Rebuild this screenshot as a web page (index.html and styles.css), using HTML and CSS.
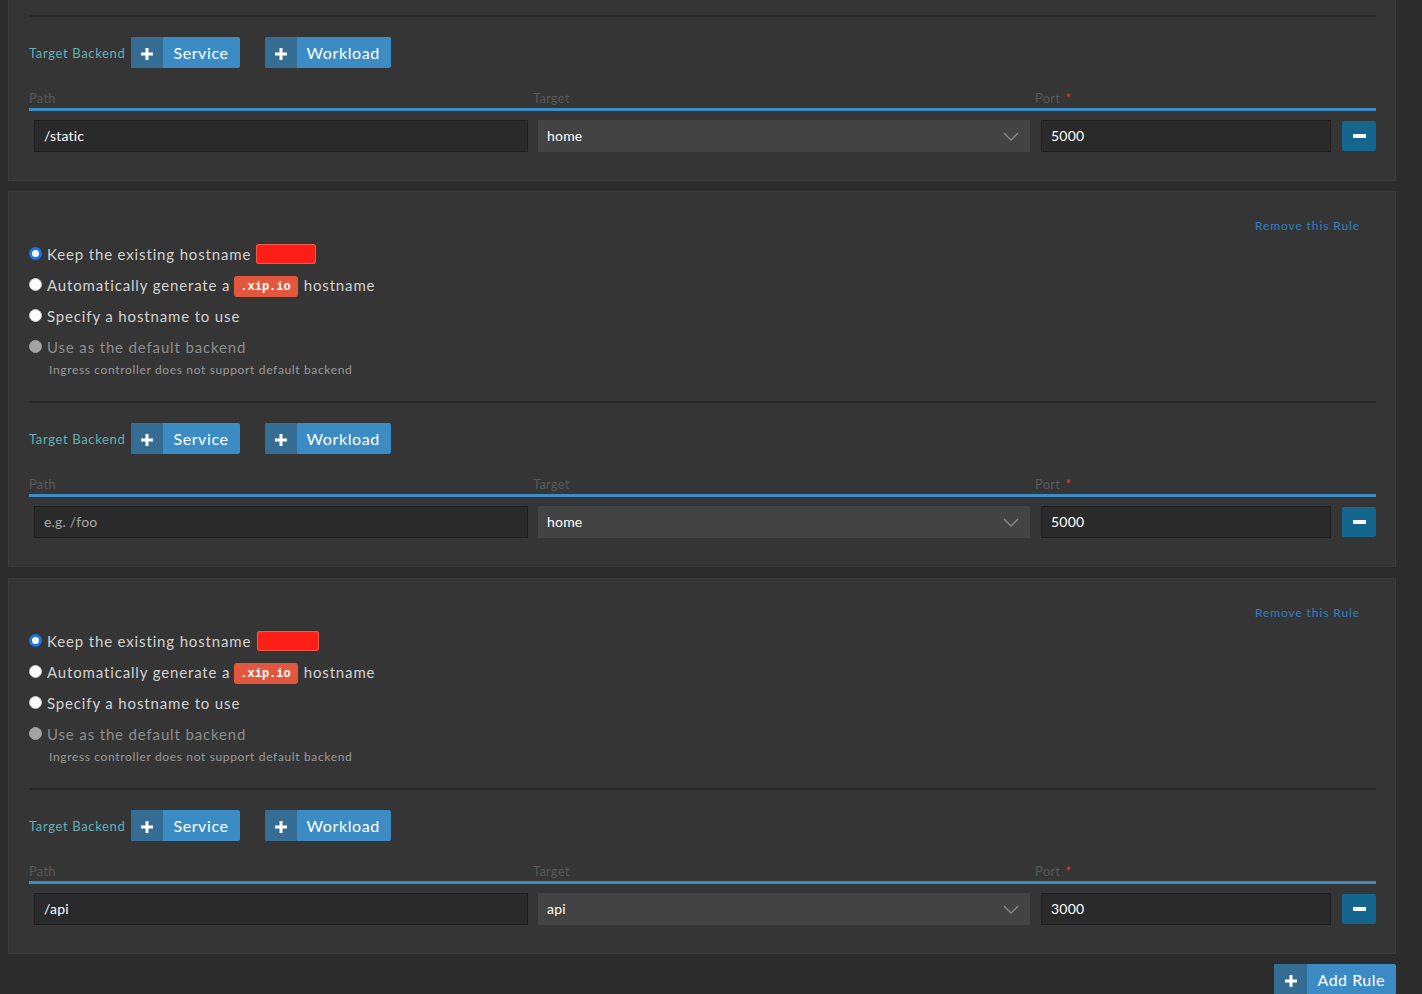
FILE: index.html
```html
<!DOCTYPE html>
<html lang="en">
<head>
<meta charset="utf-8">
<title>Ingress Rules</title>
<link rel="stylesheet" href="styles.css">
</head>
<body>
<div class="page">

  <section class="rule rule-first">
    <div class="sep"></div>
    <div class="backend">
      <span class="tb-label">Target Backend</span>
      <button class="btn"><span class="btn-icon"><svg width="12" height="12" viewBox="0 0 12 12"><rect x="4.5" y="0" width="3" height="12" fill="#fff"/><rect x="0" y="4.5" width="12" height="3" fill="#fff"/></svg></span><span class="btn-text">Service</span></button>
      <button class="btn"><span class="btn-icon"><svg width="12" height="12" viewBox="0 0 12 12"><rect x="4.5" y="0" width="3" height="12" fill="#fff"/><rect x="0" y="4.5" width="12" height="3" fill="#fff"/></svg></span><span class="btn-text">Workload</span></button>
    </div>
    <div class="cols labels"><div class="c1">Path</div><div class="c2">Target</div><div class="c3">Port <span class="req">*</span></div></div>
    <div class="cols inputs">
      <div class="c1"><div class="input">/static</div></div>
      <div class="c2"><div class="select"><span>home</span><svg class="chev" width="16" height="9" viewBox="0 0 16 9"><path d="M1 1 L8 8 L15 1" fill="none" stroke="#8a8a8a" stroke-width="1.3"/></svg></div></div>
      <div class="c3"><div class="input port">5000</div><button class="minus"><span></span></button></div>
    </div>
  </section>

  <section class="rule">
    <div class="rule-head"><a class="remove">Remove this Rule</a></div>
    <div class="radios">
      <div class="radio-row"><span class="radio checked"></span><span>Keep the existing hostname</span><span class="redact"></span></div>
      <div class="radio-row"><span class="radio"></span><span>Automatically generate a</span><code class="badge">.xip.io</code><span>hostname</span></div>
      <div class="radio-row"><span class="radio"></span><span>Specify a hostname to use</span></div>
      <div class="radio-row disabled"><span class="radio"></span><span>Use as the default backend</span></div>
    </div>
    <p class="help">Ingress controller does not support default backend</p>
    <div class="sep"></div>
    <div class="backend">
      <span class="tb-label">Target Backend</span>
      <button class="btn"><span class="btn-icon"><svg width="12" height="12" viewBox="0 0 12 12"><rect x="4.5" y="0" width="3" height="12" fill="#fff"/><rect x="0" y="4.5" width="12" height="3" fill="#fff"/></svg></span><span class="btn-text">Service</span></button>
      <button class="btn"><span class="btn-icon"><svg width="12" height="12" viewBox="0 0 12 12"><rect x="4.5" y="0" width="3" height="12" fill="#fff"/><rect x="0" y="4.5" width="12" height="3" fill="#fff"/></svg></span><span class="btn-text">Workload</span></button>
    </div>
    <div class="cols labels"><div class="c1">Path</div><div class="c2">Target</div><div class="c3">Port <span class="req">*</span></div></div>
    <div class="cols inputs">
      <div class="c1"><div class="input placeholder">e.g. /foo</div></div>
      <div class="c2"><div class="select"><span>home</span><svg class="chev" width="16" height="9" viewBox="0 0 16 9"><path d="M1 1 L8 8 L15 1" fill="none" stroke="#8a8a8a" stroke-width="1.3"/></svg></div></div>
      <div class="c3"><div class="input port">5000</div><button class="minus"><span></span></button></div>
    </div>
  </section>

  <section class="rule">
    <div class="rule-head"><a class="remove">Remove this Rule</a></div>
    <div class="radios">
      <div class="radio-row"><span class="radio checked"></span><span>Keep the existing hostname</span><span class="redact wide"></span></div>
      <div class="radio-row"><span class="radio"></span><span>Automatically generate a</span><code class="badge">.xip.io</code><span>hostname</span></div>
      <div class="radio-row"><span class="radio"></span><span>Specify a hostname to use</span></div>
      <div class="radio-row disabled"><span class="radio"></span><span>Use as the default backend</span></div>
    </div>
    <p class="help">Ingress controller does not support default backend</p>
    <div class="sep"></div>
    <div class="backend">
      <span class="tb-label">Target Backend</span>
      <button class="btn"><span class="btn-icon"><svg width="12" height="12" viewBox="0 0 12 12"><rect x="4.5" y="0" width="3" height="12" fill="#fff"/><rect x="0" y="4.5" width="12" height="3" fill="#fff"/></svg></span><span class="btn-text">Service</span></button>
      <button class="btn"><span class="btn-icon"><svg width="12" height="12" viewBox="0 0 12 12"><rect x="4.5" y="0" width="3" height="12" fill="#fff"/><rect x="0" y="4.5" width="12" height="3" fill="#fff"/></svg></span><span class="btn-text">Workload</span></button>
    </div>
    <div class="cols labels"><div class="c1">Path</div><div class="c2">Target</div><div class="c3">Port <span class="req">*</span></div></div>
    <div class="cols inputs">
      <div class="c1"><div class="input">/api</div></div>
      <div class="c2"><div class="select"><span>api</span><svg class="chev" width="16" height="9" viewBox="0 0 16 9"><path d="M1 1 L8 8 L15 1" fill="none" stroke="#8a8a8a" stroke-width="1.3"/></svg></div></div>
      <div class="c3"><div class="input port">3000</div><button class="minus"><span></span></button></div>
    </div>
  </section>

  <div class="footer">
    <button class="btn add"><span class="btn-icon"><svg width="12" height="12" viewBox="0 0 12 12"><rect x="4.5" y="0" width="3" height="12" fill="#fff"/><rect x="0" y="4.5" width="12" height="3" fill="#fff"/></svg></span><span class="btn-text">Add Rule</span></button>
  </div>
</div>
</body>
</html>
```

FILE: styles.css
```css
html, body {
  margin: 0;
  padding: 0;
  background: #2c2c2c;
  overflow: hidden;
}
body {
  font-family: Lato, "Noto Sans", "Liberation Sans", sans-serif;
  color: #d0d0d0;
}
.page {
  width: 1388px;
  padding: 0 8px;
}
.rule {
  box-sizing: border-box;
  background: #353535;
  border: 1px solid #3b3b3b;
  padding: 26px 19px 28px 20px;
  margin-bottom: 11px;
}
.rule-first {
  margin-top: -20px;
  padding-top: 34px;
  margin-bottom: 10px;
}
.rule-first .sep {
  margin-top: 0;
}
.rule-head {
  display: flex;
  justify-content: flex-end;
  height: 16px;
  padding-right: 16px;
}
.remove {
  font-size: 12px;
  line-height: 16px;
  letter-spacing: 0.9px;
  color: #2f80c0;
}
.radios {
  margin-top: 4px;
}
.radio-row {
  display: flex;
  align-items: center;
  height: 31px;
  font-size: 15px;
  letter-spacing: 0.85px;
  color: #d2d2d2;
}
.radio {
  box-sizing: border-box;
  width: 13px;
  height: 13px;
  border-radius: 50%;
  background: #fff;
  border: 1px solid #c8c8c8;
  margin-right: 5px;
  flex: none;
}
.radio.checked {
  border: 3px solid #1a74ea;
}
.radio-row.disabled {
  color: #8d8d8d;
}
.radio-row.disabled .radio {
  background: #a2a2a2;
  border-color: #a2a2a2;
}
.redact {
  display: inline-block;
  width: 60px;
  height: 20px;
  background: #ff1f17;
  border-radius: 3px;
  box-shadow: inset 0 0 0 1px #ee5a48;
  margin-left: 5px;
}
.redact.wide {
  width: 62px;
  margin-left: 6px;
}
.badge {
  display: inline-flex;
  align-items: center;
  box-sizing: border-box;
  height: 21px;
  padding: 1px 7px 0 6px;
  margin: 3px 6px 0 4px;
  background: #e4573f;
  color: #fff;
  font-family: "Liberation Mono", "DejaVu Sans Mono", monospace;
  font-weight: bold;
  font-size: 12px;
  letter-spacing: 0;
  border-radius: 3px;
}
.help {
  margin: 0 0 0 20px;
  font-size: 12px;
  line-height: 16px;
  letter-spacing: 0.65px;
  color: #9b9b9b;
}
.sep {
  height: 2px;
  background: #2a2a2a;
  margin-top: 23px;
}
.backend {
  display: flex;
  align-items: center;
  margin-top: 20px;
  height: 31px;
}
.tb-label {
  font-size: 13px;
  letter-spacing: 0.65px;
  color: #64b0b6;
  margin-right: 6px;
}
.btn {
  display: inline-flex;
  align-items: stretch;
  height: 31px;
  padding: 0;
  border: 0;
  border-radius: 2px;
  overflow: hidden;
  background: #3b8bc5;
  font-family: inherit;
  cursor: pointer;
}
.backend .btn + .btn {
  margin-left: 25px;
}
.btn-icon {
  display: flex;
  align-items: center;
  justify-content: center;
  width: 32px;
  background: #366d95;
}
.btn-icon svg {
  margin-top: 2px;
}
.btn-text {
  display: flex;
  align-items: center;
  padding: 0 11px 0 10px;
  font-size: 16px;
  letter-spacing: 0.6px;
  color: #fff;
}
.cols {
  display: grid;
  grid-template-columns: 504px 502px 1fr;
}
.labels {
  margin-top: 22px;
  padding-bottom: 2px;
  border-bottom: 3px solid #3c8cc6;
  font-size: 13px;
  line-height: 17px;
  height: 16px;
  letter-spacing: 0.2px;
  color: #585858;
}
.req {
  color: #e03a3a;
  margin-left: 2px;
}
.inputs {
  margin-top: 9px;
  height: 32px;
}
.inputs .c1, .inputs .c2 {
  padding: 0 5px;
}
.inputs .c3 {
  display: flex;
  padding-left: 6px;
  gap: 11px;
  align-items: center;
}
.input {
  box-sizing: border-box;
  height: 32px;
  display: flex;
  align-items: center;
  padding: 0 0 2px 9px;
  background: #2a2a2a;
  border: 1px solid #1f1f1f;
  font-size: 14px;
  color: #fff;
  letter-spacing: 0.2px;
}
.input.placeholder {
  color: #a8a8a8;
}
.input.port {
  width: 290px;
  flex: none;
}
.select {
  box-sizing: border-box;
  height: 32px;
  display: flex;
  align-items: center;
  justify-content: space-between;
  padding: 0 11px 2px 9px;
  background: #434343;
  font-size: 14px;
  color: #fff;
  letter-spacing: 0.2px;
}
.select .chev {
  margin-top: 2px;
}
.minus {
  width: 34px;
  height: 30px;
  border: 0;
  border-radius: 2px;
  padding: 0;
  background: #15668f;
  display: flex;
  align-items: center;
  justify-content: center;
}
.minus span {
  display: block;
  width: 13px;
  height: 4px;
  background: #fff;
}
.footer {
  display: flex;
  justify-content: flex-end;
  margin-top: -1px;
}
.btn.add {
  height: 31px;
}
.btn.add .btn-icon {
  width: 33px;
}
.btn.add .btn-text {
  font-size: 16px;
  letter-spacing: 0.5px;
}
```
